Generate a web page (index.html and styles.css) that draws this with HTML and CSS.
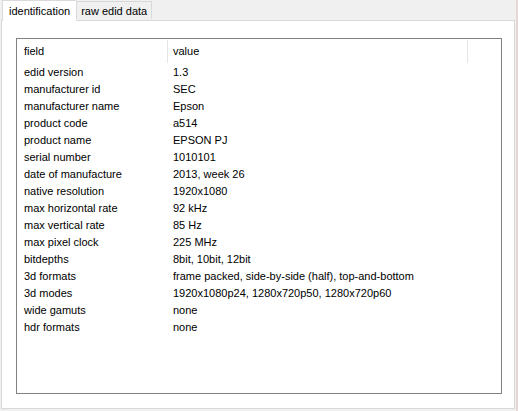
FILE: index.html
```html
<!DOCTYPE html>
<html>
<head>
<meta charset="utf-8">
<link rel="stylesheet" href="styles.css">
</head>
<body>
<div class="window">
  <div class="tabs">
    <div class="tab active">identification</div>
    <div class="tab">raw edid data</div>
  </div>
  <div class="panel">
    <div class="list">
      <div class="header">
        <div class="hcell c1">field</div>
        <div class="hcell c2">value</div>
        <div class="hcell c3"></div>
      </div>
      <div class="rows">
        <div class="row"><span class="k">edid version</span><span class="v">1.3</span></div>
        <div class="row"><span class="k">manufacturer id</span><span class="v">SEC</span></div>
        <div class="row"><span class="k">manufacturer name</span><span class="v">Epson</span></div>
        <div class="row"><span class="k">product code</span><span class="v">a514</span></div>
        <div class="row"><span class="k">product name</span><span class="v">EPSON PJ</span></div>
        <div class="row"><span class="k">serial number</span><span class="v">1010101</span></div>
        <div class="row"><span class="k">date of manufacture</span><span class="v">2013, week 26</span></div>
        <div class="row"><span class="k">native resolution</span><span class="v">1920x1080</span></div>
        <div class="row"><span class="k">max horizontal rate</span><span class="v">92 kHz</span></div>
        <div class="row"><span class="k">max vertical rate</span><span class="v">85 Hz</span></div>
        <div class="row"><span class="k">max pixel clock</span><span class="v">225 MHz</span></div>
        <div class="row"><span class="k">bitdepths</span><span class="v">8bit, 10bit, 12bit</span></div>
        <div class="row"><span class="k">3d formats</span><span class="v">frame packed, side-by-side (half), top-and-bottom</span></div>
        <div class="row"><span class="k">3d modes</span><span class="v">1920x1080p24, 1280x720p50, 1280x720p60</span></div>
        <div class="row"><span class="k">wide gamuts</span><span class="v">none</span></div>
        <div class="row"><span class="k">hdr formats</span><span class="v">none</span></div>
      </div>
    </div>
  </div>
</div>
</body>
</html>
```

FILE: styles.css
```css
html, body {
  margin: 0;
  padding: 0;
  background: #f0f0f0;
}
body {
  width: 518px;
  height: 411px;
  overflow: hidden;
  font-family: "Liberation Sans", Arial, sans-serif;
  font-size: 11px;
  color: #000;
}
.window {
  width: 518px;
  height: 411px;
  border-right: 2px solid #e6d6d6;
  box-sizing: border-box;
  display: flex;
  flex-direction: column;
}
.tabs {
  display: flex;
  align-items: flex-end;
  height: 20px;
  padding-left: 2px;
  position: relative;
  z-index: 1;
}
.tab {
  height: 18px;
  line-height: 18px;
  padding: 0 4px;
  border: 1px solid #d9d9d9;
  border-bottom: none;
  background: #f0f0f0;
  box-sizing: border-box;
  margin-bottom: 1px;
}
.tab.active {
  height: 21px;
  line-height: 20px;
  background: #fff;
  margin-bottom: -1px;
  padding: 0 6px 0 6px;
  border-right: none;
}
.panel {
  margin: 0 1px 2px 1px;
  height: 390px;
  box-sizing: border-box;
  border: 1px solid #d9d9d9;
  background: #fff;
  padding: 17px 14px 0 14px;
}
.list {
  width: 486px;
  height: 356px;
  box-sizing: border-box;
  border: 1px solid #828282;
  background: #fff;
}
.header {
  display: flex;
  height: 25px;
}
.hcell {
  box-sizing: border-box;
  padding-left: 7px;
  line-height: 23px;
  border-right: 1px solid #e5e5e5;
  margin: 1px 0 1px;
}
.c1 { width: 151px; }
.c2 { width: 300px; padding-left: 5px; }
.c3 { width: 32px; border-right: none; }
.row {
  display: flex;
  height: 17px;
  line-height: 17px;
}
.k {
  width: 151px;
  padding-left: 7px;
  box-sizing: border-box;
}
.v {
  padding-left: 5px;
}
```
